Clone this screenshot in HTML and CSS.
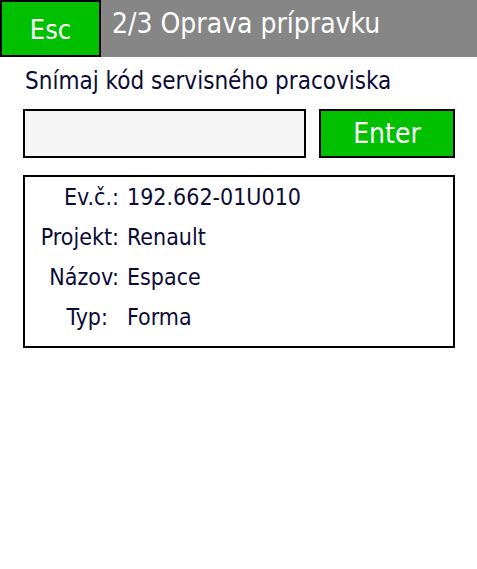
FILE: index.html
```html
<!DOCTYPE html>
<html>
<head>
<meta charset="utf-8">
<link rel="stylesheet" href="styles.css">
</head>
<body>
<div class="header">
  <div class="esc">Esc</div>
  <div class="title">2/3 Oprava prípravku</div>
</div>
<div class="content">
  <div class="prompt">Snímaj kód servisného pracoviska</div>
  <div class="inputrow">
    <div class="input"></div>
    <div class="enter">Enter</div>
  </div>
  <div class="info">
    <div class="row"><span class="lbl">Ev.č.:</span><span class="val">192.662-01U010</span></div>
    <div class="row"><span class="lbl">Projekt:</span><span class="val">Renault</span></div>
    <div class="row"><span class="lbl">Názov:</span><span class="val">Espace</span></div>
    <div class="row"><span class="lbl typ">Typ:</span><span class="val">Forma</span></div>
  </div>
</div>
</body>
</html>
```
FILE: styles.css
```css
html, body { margin: 0; padding: 0; background: #fff; }
body { width: 477px; height: 569px; font-family: "DejaVu Sans Condensed", "DejaVu Sans", sans-serif; color: #0b0b35; }
.header { display: flex; height: 57px; background: #878687; }
.esc { width: 97px; height: 41px; padding-top: 12px; background: #00c000; border: 2px solid #000; color: #fff; font-size: 27px; line-height: normal; text-align: center; }
.title { color: #fff; font-size: 28px; padding-left: 11px; padding-top: 7px; line-height: normal; }
.content { padding: 10px 0 0 23px; }
.prompt { font-size: 24px; padding-left: 2px; height: 42px; line-height: normal; }
.inputrow { display: flex; gap: 13px; }
.input { width: 279px; height: 45px; border: 2px solid #000; background: #f5f5f5; }
.enter { width: 132px; height: 45px; border: 2px solid #000; background: #00c000; color: #fff; font-size: 28px; display: flex; align-items: center; justify-content: center; }
.info { margin-top: 17px; width: 432px; height: 173px; border: 2px solid #000; padding-top: 0; box-sizing: border-box; }
.row { display: flex; height: 40px; align-items: center; font-size: 23px; }
.lbl { width: 94px; text-align: right; }
.lbl.typ { padding-right: 11px; width: 83px; }
.val { padding-left: 8px; }
```
